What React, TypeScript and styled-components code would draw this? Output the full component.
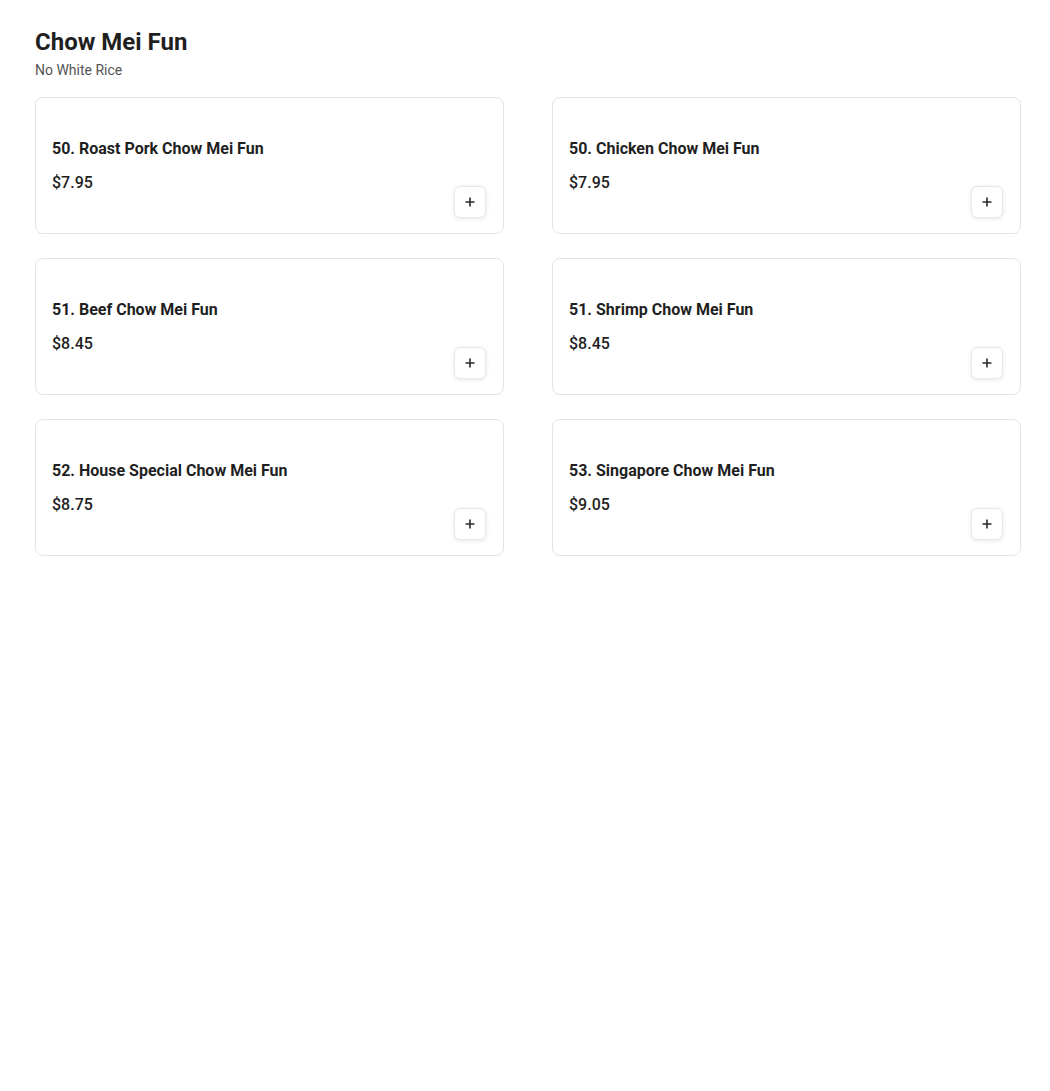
import React from 'react';
import styled, { createGlobalStyle } from 'styled-components';

const GlobalStyle = createGlobalStyle`
  body {
    margin: 0;
    background: #ffffff;
    font-family: Roboto, "Liberation Sans", Arial, sans-serif;
    color: #1f1f1f;
  }
`;

const Page = styled.div`
  padding: 28px 29px 40px 35px;
`;

const Title = styled.h1`
  margin: 0;
  font-size: 24px;
  line-height: 28px;
  font-weight: 700;
  color: #1f1f1f;
`;

const Subtitle = styled.div`
  margin-top: 6px;
  font-size: 14px;
  line-height: 17px;
  color: #555555;
`;

const Grid = styled.div`
  margin-top: 18px;
  display: grid;
  grid-template-columns: repeat(2, 469px);
  column-gap: 48px;
  row-gap: 24px;
`;

const Card = styled.div`
  box-sizing: border-box;
  height: 137px;
  padding: 16px 17px 15px 16px;
  border: 1px solid #e3e3e3;
  border-radius: 8px;
  background: #fff;
  display: flex;
  align-items: flex-end;
`;

const Info = styled.div`
  flex: 1;
  align-self: flex-start;
  padding-top: 25px;
`;

const Name = styled.div`
  font-size: 16px;
  line-height: 20px;
  font-weight: 700;
  color: #1f1f1f;
`;

const Price = styled.div`
  margin-top: 14px;
  font-size: 16px;
  line-height: 20px;
  font-weight: 500;
  color: #1f1f1f;
`;

const AddButton = styled.button`
  box-sizing: border-box;
  width: 32px;
  height: 32px;
  padding: 0;
  border: 1px solid #e8e8e8;
  border-radius: 6px;
  background: #fff;
  box-shadow: 0 1px 4px rgba(0, 0, 0, 0.1);
  display: flex;
  align-items: center;
  justify-content: center;
  cursor: pointer;
`;

const items = [
  { name: '50. Roast Pork Chow Mei Fun', price: '$7.95' },
  { name: '50. Chicken Chow Mei Fun', price: '$7.95' },
  { name: '51. Beef Chow Mei Fun', price: '$8.45' },
  { name: '51. Shrimp Chow Mei Fun', price: '$8.45' },
  { name: '52. House Special Chow Mei Fun', price: '$8.75' },
  { name: '53. Singapore Chow Mei Fun', price: '$9.05' },
];

const PlusIcon = () => (
  <svg width="10" height="10" viewBox="0 0 10 10">
    <path d="M5 0.5v9M0.5 5h9" stroke="#2a2a2a" strokeWidth="1.6" />
  </svg>
);

export default function App() {
  return (
    <>
      <GlobalStyle />
      <Page>
        <Title>Chow Mei Fun</Title>
        <Subtitle>No White Rice</Subtitle>
        <Grid>
          {items.map((item) => (
            <Card key={item.name}>
              <Info>
                <Name>{item.name}</Name>
                <Price>{item.price}</Price>
              </Info>
              <AddButton aria-label="Add">
                <PlusIcon />
              </AddButton>
            </Card>
          ))}
        </Grid>
      </Page>
    </>
  );
}
